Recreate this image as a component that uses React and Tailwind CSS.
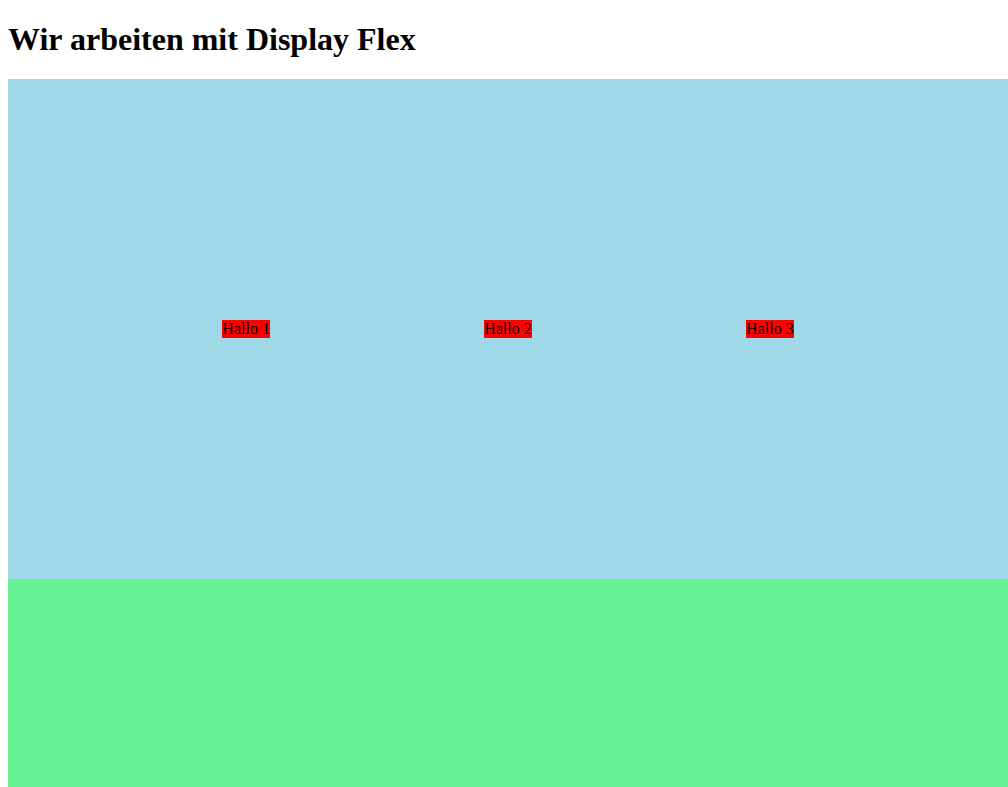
import React from 'react';

// Drei Boxen, gleichmäßig verteilt mit display flex
const items = ['Hallo 1', 'Hallo 2', 'Hallo 3'];

const App = () => {
  return (
    <div className="px-2 pt-[21px] bg-white text-black font-['Liberation_Serif','Times_New_Roman',serif]">
      <h1 className="text-[32px] font-bold leading-[37px] mb-[21px]">Wir arbeiten mit Display Flex</h1>

      {/* Flex-Container */}
      <div className="flex w-[1000px] h-[500px] items-center justify-evenly bg-[#9fd8e6]">
        {items.map((item) => (
          <div key={item} className="bg-[#ff0000] text-[16px] leading-[18px]">
            {item}
          </div>
        ))}
      </div>

      <div className="w-[1000px] h-[500px] bg-[#66f194]"></div>
    </div>
  );
};

export default App;
